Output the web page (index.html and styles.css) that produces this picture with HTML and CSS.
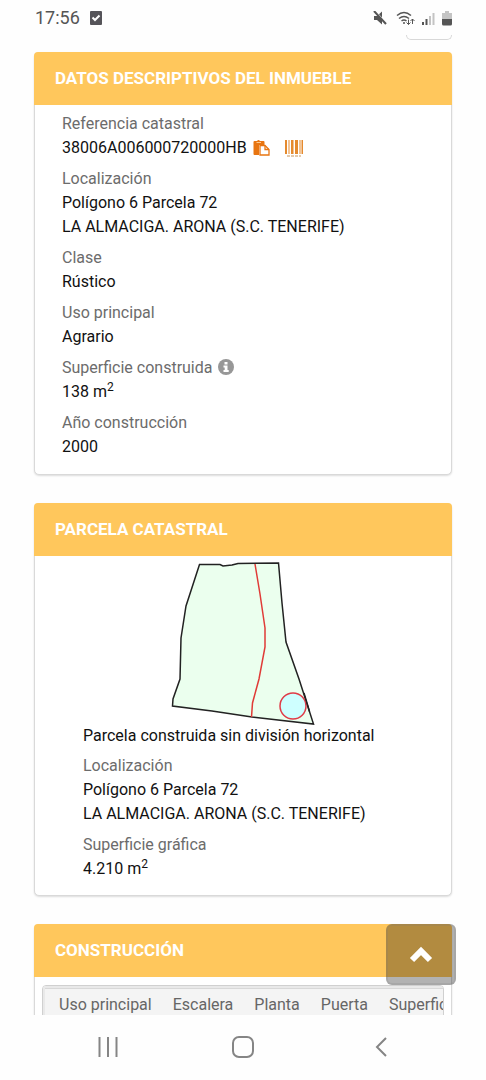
FILE: index.html
```html
<!DOCTYPE html>
<html lang="es">
<head>
<meta charset="utf-8">
<meta name="viewport" content="width=device-width, initial-scale=1">
<title>Datos descriptivos del inmueble</title>
<link rel="stylesheet" href="styles.css">
</head>
<body>
<header class="status">
  <time class="clock">17:56</time>
  <svg class="status-check" width="12" height="14" viewBox="0 0 12 14" aria-hidden="true"><rect width="12" height="14" rx="1" fill="#555459"/><path d="M2.500 6.500 5 9l4.500-4.500" fill="none" stroke="#fff" stroke-width="2"/></svg>
  <div class="status-icons">
    <svg width="14" height="14" viewBox="0 0 14 14" aria-hidden="true"><path d="M1 5h3l5-4.500v13L4 9H1z" fill="#555"/><path d="M2 0l12 13" stroke="#fff" stroke-width="1.500"/><path d="M1 0l12 13" stroke="#555" stroke-width="2"/></svg>
    <svg width="19" height="15" viewBox="0 0 19 15" fill="none" stroke="#555" stroke-width="1.500" aria-hidden="true"><path d="M1 4.500q7-6 14 0M3 7.500q5-4 10 0M5.500 10q2.500-2 5 0"/><circle cx="8" cy="12" r="1" fill="#555" stroke="none"/><path d="M12.500 8.500v5m-2-2 2 2 2-2M16.500 13V8m-2 2 2-2 2 2" stroke-width="1"/></svg>
    <svg width="13" height="13" viewBox="0 0 13 13" aria-hidden="true"><path d="M0 10h2v3H0zM3.500 7h2v6h-2z" fill="#555"/><path d="M7 4h2v9H7zM10.500 1h2v12h-2z" fill="#c4c4c4"/></svg>
    <svg width="10" height="15" viewBox="0 0 10 15" aria-hidden="true"><path d="M3 0h4v2h3v6H0V2h3z" fill="#c4c4c4"/><path d="M0 8h10v5q0 1.500-1.500 1.500h-7Q0 14.500 0 13z" fill="#555"/></svg>
  </div>
</header>

<main class="page">
  <div class="toolbar-end"></div>

  <section class="card">
    <h2 class="card-title">DATOS DESCRIPTIVOS DEL INMUEBLE</h2>
    <dl class="fields">
      <div class="field">
        <dt>Referencia catastral</dt>
        <dd class="reference">38006A006000720000HB
          <button class="icon-button" aria-label="Copiar referencia"><svg width="17" height="16" viewBox="0 0 17 16" aria-hidden="true"><path d="M1.500 1H4q1.500-2 3 0h3.500q1 0 1 1v3H6v10H1.500q-1 0-1-1V2q0-1 1-1z" fill="#e87511"/><path d="M3.500 2.500h4.500" stroke="#ffc98f"/><path d="M7 5.500h5l4 4V15H7z" fill="#fff" stroke="#e87511" stroke-width="1.300"/><path d="M12 5.500V9.500h4" fill="none" stroke="#e87511" stroke-width="1.300"/></svg></button>
          <button class="icon-button barcode" aria-label="Código de barras"><svg width="18" height="17" viewBox="0 0 18 17" aria-hidden="true"><path d="M0 0h2v14H0zM3.500 0h1v14h-1zM6 0h2.500v14H6zM10 0h3v14h-3zM14.500 0h1v14h-1zM16.500 0H18v14h-1.500z" fill="#e58a2e"/><path d="M2 16h14" stroke="#c99458" stroke-dasharray="3 1"/></svg></button>
        </dd>
      </div>
      <div class="field"><dt>Localización</dt><dd>Polígono 6 Parcela 72<br>LA ALMACIGA. ARONA (S.C. TENERIFE)</dd></div>
      <div class="field"><dt>Clase</dt><dd>Rústico</dd></div>
      <div class="field"><dt>Uso principal</dt><dd>Agrario</dd></div>
      <div class="field">
        <dt>Superficie construida <svg class="info" width="16" height="16" viewBox="0 0 16 16" aria-hidden="true"><circle cx="8" cy="8" r="8" fill="#979797"/><path d="M6.500 3h3v2.500h-3zM5.500 6.500h4V11h1.200v2H5.500v-2h1.200V8.500H5.500z" fill="#fff"/></svg></dt>
        <dd>138 m<sup>2</sup></dd>
      </div>
      <div class="field"><dt>Año construcción</dt><dd>2000</dd></div>
    </dl>
  </section>

  <section class="card">
    <h2 class="card-title">PARCELA CATASTRAL</h2>
    <svg class="parcel" width="146" height="166" viewBox="0 0 146 166" role="img" aria-label="Plano de la parcela">
      <path d="M29.500 4.500 50 4.500 53 6 62 5 68 3.500 108.500 3 112 43 116 82 129 119 143.500 164 82 157 42 151 2.500 146 3 139 10 119 11 78 16 46z" fill="#ebffee" stroke="#222" stroke-width="1.500"/>
      <path d="M85 4 90 34 95 68v19L89 119 82.500 143 81.500 157" fill="none" stroke="#e03b37" stroke-width="1.500"/>
      <circle cx="123" cy="146" r="13" fill="#ceffff" stroke="#df3c48" stroke-width="1.500"/>
      <path d="M134 133l5.500 18.500" stroke="#222" stroke-width="1.500"/>
    </svg>
    <div class="parcel-data">
      <p class="parcel-type">Parcela construida sin división horizontal</p>
      <dl class="fields inset">
        <div class="field"><dt>Localización</dt><dd>Polígono 6 Parcela 72<br>LA ALMACIGA. ARONA (S.C. TENERIFE)</dd></div>
        <div class="field"><dt>Superficie gráfica</dt><dd>4.210 m<sup>2</sup></dd></div>
      </dl>
    </div>
  </section>

  <section class="card">
    <h2 class="card-title">CONSTRUCCIÓN</h2>
    <div class="table-scroll">
      <table class="buildings">
        <thead><tr><th>Uso principal</th><th>Escalera</th><th>Planta</th><th>Puerta</th><th>Superficie</th></tr></thead>
      </table>
    </div>
  </section>

  <button class="to-top" aria-label="Volver arriba"><svg width="24" height="18" viewBox="0 0 24 18" aria-hidden="true"><path d="M3 14l9-9 9 9" fill="none" stroke="#fff" stroke-width="6"/></svg></button>
</main>

<nav class="system-nav">
  <button aria-label="Recientes"><svg width="20" height="20" viewBox="0 0 20 20" aria-hidden="true"><path d="M1.500 0v20M10 0v20M18.500 0v20" stroke="#858585" stroke-width="2"/></svg></button>
  <button aria-label="Inicio"><svg width="22" height="22" viewBox="0 0 22 22" aria-hidden="true"><rect x="1" y="1" width="20" height="20" rx="6" fill="none" stroke="#858585" stroke-width="2"/></svg></button>
  <button aria-label="Atrás"><svg width="12" height="20" viewBox="0 0 12 20" aria-hidden="true"><path d="M11 1 2 10l9 9" fill="none" stroke="#858585" stroke-width="2"/></svg></button>
</nav>
</body>
</html>
```
FILE: styles.css
```css
* {
  box-sizing: border-box;
}

body {
  margin: 0;
  height: 100vh;
  display: flex;
  flex-direction: column;
  overflow: hidden;
  background: #fefefe;
  color: #111;
  font: 16px/24px Roboto, "Liberation Sans", sans-serif;
}

button {
  border: 0;
  padding: 0;
  background: none;
  cursor: pointer;
}

.status {
  display: flex;
  flex: none;
  align-items: center;
  height: 35px;
  padding: 1px 34px 0 35px;
}

.clock {
  color: #555;
  font-size: 18px;
}

.status-check {
  margin-left: 10px;
}

.status-icons {
  display: flex;
  align-items: center;
  gap: 7px;
  margin-left: auto;
}

.status-icons svg:first-child {
  margin-right: 2px;
}

.page {
  position: relative;
  flex: 1;
  min-height: 0;
  overflow: hidden;
  padding: 0 34px;
}

.toolbar-end {
  width: 46px;
  height: 5px;
  margin: 0 0 12px auto;
  border: 1px solid #d8d8d8;
  border-top: 0;
  border-radius: 0 0 5px 5px;
}

.card {
  margin-bottom: 28px;
  border: 1px solid #d9d9d9;
  border-radius: 5px;
  background: #fff;
  box-shadow: 0 1px 2px #0002;
}

.card-title {
  margin: -1px -1px 0;
  padding: 14px 21px 15px;
  border-radius: 4px 4px 0 0;
  background: #ffc75c;
  color: #fff;
  font-size: 17px;
  font-weight: 700;
  line-height: 24px;
}

.fields {
  display: grid;
  gap: 7px;
  margin: 0;
  padding: 7px 27px 15px;
}

.inset {
  padding: 6px 0 14px;
}

dt {
  color: #6c6c6c;
}

dd {
  margin: 0;
}

sup {
  font-size: 12px;
  line-height: 0;
}

.reference {
  display: flex;
  align-items: center;
}

.icon-button {
  display: flex;
  margin-left: 6px;
}

.barcode {
  margin-left: 15px;
}

.info {
  margin-left: 2px;
  vertical-align: -2px;
}

.parcel {
  display: block;
  margin: 4px auto -2px;
}

.parcel-data {
  padding: 0 48px;
}

.parcel-type {
  margin: 0;
}

.table-scroll {
  margin: 8px 7px;
  overflow-x: auto;
  scrollbar-width: none;
  border: 1px solid #d0d0d0;
  border-radius: 4px;
  padding: 2px;
  background: #e9e9e9;
}

.buildings {
  border-collapse: collapse;
  background: #f4f4f4;
  white-space: nowrap;
}

.buildings th {
  padding: 4px 7px 8px 14px;
  border-top: 1px solid #d8d8d8;
  color: #666;
  font-weight: 400;
  text-align: left;
}

.to-top {
  position: absolute;
  right: 30px;
  bottom: 30px;
  display: flex;
  align-items: center;
  justify-content: center;
  width: 70px;
  height: 61px;
  border: 2px solid #7773;
  border-radius: 6px;
  background: #0000004d;
}

.system-nav {
  display: grid;
  grid-template-columns: 1fr 22px 1fr;
  flex: none;
  align-items: center;
  height: 65px;
  padding: 0 99px 1px 98px;
}

.system-nav button {
  display: flex;
}

.system-nav button:last-child {
  justify-self: end;
}
```
